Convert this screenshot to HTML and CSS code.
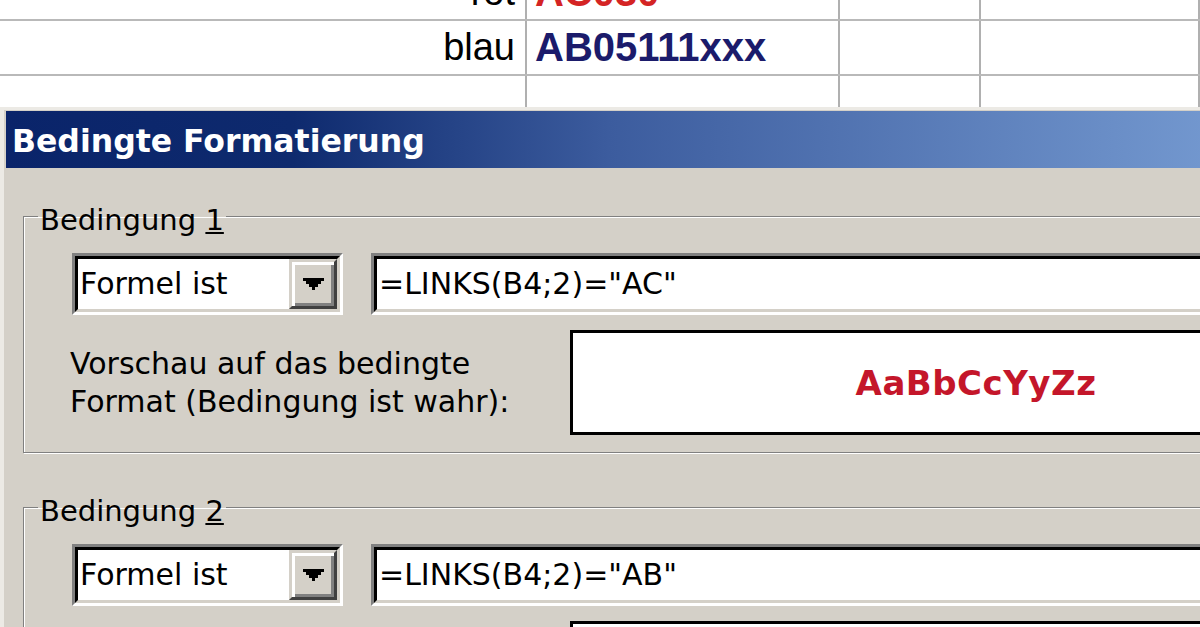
FILE: index.html
```html
<!DOCTYPE html>
<html>
<head>
    <title>Bedingte Formatierung</title>
    <link rel="stylesheet" href="styles.css">
</head>
<body>
    <div class="sheet">
        <div class="row">
            <div class="cell name">rot</div>
            <div class="cell code red">AC030</div>
            <div class="cell"></div>
            <div class="cell"></div>
        </div>
        <div class="row">
            <div class="cell name">blau</div>
            <div class="cell code navy">AB05111xxx</div>
            <div class="cell"></div>
            <div class="cell"></div>
        </div>
        <div class="row last">
            <div class="cell"></div>
            <div class="cell"></div>
            <div class="cell"></div>
            <div class="cell"></div>
        </div>
    </div>

    <div class="dialog">
        <div class="titlebar">Bedingte Formatierung</div>
        <div class="dialog-body">
            <fieldset class="cond">
                <legend>Bedingung <u>1</u></legend>
                <div class="cond-line">
                    <div class="combo">
                        <div class="combo-inner">
                            <span class="combo-text">Formel ist</span>
                            <span class="drop-btn">
                                <svg width="21" height="12" viewBox="0 0 21 12"><path d="M0 0h21v3h-3v3h-3v3h-3v3h-3v-3h-3v-3h-3v-3h-3z" fill="#000"/></svg>
                            </span>
                        </div>
                    </div>
                    <div class="field">
                        <div class="field-inner">=LINKS(B4;2)="AC"</div>
                    </div>
                </div>
                <div class="preview-line">
                    <div class="preview-label">Vorschau auf das bedingte<br>Format (Bedingung ist wahr):</div>
                    <div class="preview">AaBbCcYyZz</div>
                </div>
            </fieldset>

            <fieldset class="cond">
                <legend>Bedingung <u>2</u></legend>
                <div class="cond-line">
                    <div class="combo">
                        <div class="combo-inner">
                            <span class="combo-text">Formel ist</span>
                            <span class="drop-btn">
                                <svg width="21" height="12" viewBox="0 0 21 12"><path d="M0 0h21v3h-3v3h-3v3h-3v3h-3v-3h-3v-3h-3v-3h-3z" fill="#000"/></svg>
                            </span>
                        </div>
                    </div>
                    <div class="field">
                        <div class="field-inner">=LINKS(B4;2)="AB"</div>
                    </div>
                </div>
                <div class="preview-line">
                    <div class="preview-label"></div>
                    <div class="preview"></div>
                </div>
            </fieldset>
        </div>
    </div>
</body>
</html>
```

FILE: styles.css
```css
* {
    margin: 0;
    padding: 0;
    box-sizing: border-box;
}

body {
    width: 1200px;
    height: 627px;
    overflow: hidden;
    background-color: #fff;
    font-family: "DejaVu Sans", Tahoma, sans-serif;
    color: #000;
}

/* Spreadsheet behind the dialog */
.sheet {
    margin-top: -34px;
    font-family: "Liberation Sans", Arial, sans-serif;
}

.row {
    display: grid;
    grid-template-columns: 527px 313px 141px 1fr;
    height: 55px;
    border-bottom: 2px solid #b9b9b9;
}

.row.last {
    height: 31px;
    border-bottom: none;
}

.cell {
    display: flex;
    align-items: center;
    border-right: 2px solid #b0b0b0;
    font-size: 38px;
    line-height: 53px;
}

.name {
    justify-content: flex-end;
    padding-right: 10px;
}

.code {
    padding-left: 8px;
    font-weight: bold;
    font-size: 40px;
}

.red {
    color: #d42424;
}

.navy {
    color: #1b1b6b;
}

/* Dialog window */
.dialog {
    width: 1440px;
    height: 530px;
    padding: 4px 0 0 6px;
    background-color: #d4d0c8;
    box-shadow: inset 4px 3px 0 #eceae5;
}

.titlebar {
    height: 57px;
    padding: 3px 0 0 6px;
    background: linear-gradient(90deg, #0a246a 0, #0e2a6e 20%, #3c5c9e 42%, #7499d0 85%, #a6caf0 100%);
    color: #fff;
    font-weight: bold;
    font-size: 31.5px;
    line-height: 54px;
}

.dialog-body {
    padding: 29px 0 0 17px;
}

.cond {
    width: 1390px;
    border: 1px solid #808080;
    box-shadow: 1px 1px 0 #fff, inset 1px 1px 0 #fff;
    padding: 18px 0 17px 14px;
}

.cond + .cond {
    margin-top: 35px;
}

legend {
    padding: 8px 2px 0;
    font-size: 29px;
    line-height: 30px;
}

.cond-line {
    display: flex;
    gap: 28px;
    margin-left: 34px;
}

.combo,
.field {
    height: 62px;
    border: 3px solid;
    border-color: #808080 #fff #fff #808080;
}

.combo {
    width: 271px;
}

.field {
    flex: 1;
}

.combo-inner,
.field-inner {
    height: 100%;
    border: 3px solid;
    border-color: #000 #d4d0c8 #d4d0c8 #000;
    background-color: #fff;
    font-size: 30px;
    line-height: 50px;
}

.combo-inner {
    display: flex;
}

.combo-text {
    flex: 1;
    padding-left: 2px;
}

.field-inner {
    padding-left: 2px;
}

.drop-btn {
    width: 48px;
    display: flex;
    align-items: center;
    justify-content: center;
    background-color: #d4d0c8;
    border: 3px solid;
    border-color: #d4d0c8 #404040 #404040 #d4d0c8;
    box-shadow: inset 3px 3px 0 #fff, inset -3px -3px 0 #808080;
}

.preview-line {
    display: flex;
    align-items: center;
    margin-top: 15px;
    margin-left: 32px;
}

.preview-label {
    width: 500px;
    font-size: 30px;
    line-height: 38px;
}

.preview {
    width: 812px;
    height: 105px;
    display: flex;
    align-items: center;
    justify-content: center;
    border: 3px solid #000;
    background-color: #fff;
    color: #c4162a;
    font-weight: bold;
    font-size: 34px;
    letter-spacing: 0.5px;
}
```
